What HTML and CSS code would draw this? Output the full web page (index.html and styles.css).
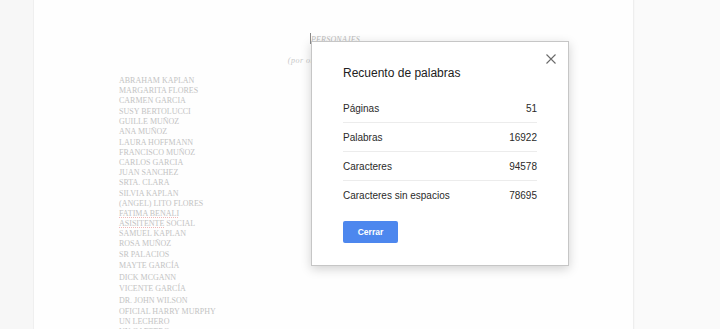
FILE: index.html
```html
<!DOCTYPE html>
<html lang="es">
<head>
<meta charset="utf-8">
<title>Recuento de palabras</title>
<link rel="stylesheet" href="styles.css">
</head>
<body>
<div class="workspace">
  <div class="page">
    <div class="heading"><span class="cursor"></span><span class="heading-text">PERSONAJES</span></div>
    <div class="subheading">(por orden de aparición)</div>
    <div class="names">
      <div class="name">ABRAHAM KAPLAN</div>
      <div class="name">MARGARITA FLORES</div>
      <div class="name">CARMEN GARCIA</div>
      <div class="name gap">SUSY BERTOLUCCI</div>
      <div class="name">GUILLE MUÑOZ</div>
      <div class="name">ANA MUÑOZ</div>
      <div class="name gap">LAURA HOFFMANN</div>
      <div class="name">FRANCISCO MUÑOZ</div>
      <div class="name">CARLOS GARCIA</div>
      <div class="name">JUAN SANCHEZ</div>
      <div class="name">SRTA. CLARA</div>
      <div class="name gap">SILVIA KAPLAN</div>
      <div class="name">(ANGEL) LITO FLORES</div>
      <div class="name"><span class="spell">FATIMA BENALI</span></div>
      <div class="name"><span class="spell">ASISITENTE</span> SOCIAL</div>
      <div class="name">SAMUEL KAPLAN</div>
      <div class="name">ROSA MUÑOZ</div>
      <div class="name wide">SR PALACIOS</div>
      <div class="name wide">MAYTE GARCÍA</div>
      <div class="name wide">DICK MCGANN</div>
      <div class="name wide">VICENTE GARCÍA</div>
      <div class="name wide">DR. JOHN WILSON</div>
      <div class="name wide">OFICIAL HARRY MURPHY</div>
      <div class="name">UN LECHERO</div>
      <div class="name">UN CARTERO</div>
    </div>
  </div>
</div>

<div class="dialog" role="dialog" aria-label="Recuento de palabras">
  <button class="close" aria-label="Cerrar">
    <svg width="12" height="12" viewBox="0 0 12 12"><path d="M1.5 1.5 L10.5 10.5 M10.5 1.5 L1.5 10.5" stroke="#6a6a6a" stroke-width="1.1" fill="none"/></svg>
  </button>
  <div class="title">Recuento de palabras</div>
  <div class="rows">
    <div class="row"><span>Páginas</span><span>51</span></div>
    <div class="row"><span>Palabras</span><span>16922</span></div>
    <div class="row"><span>Caracteres</span><span>94578</span></div>
    <div class="row"><span>Caracteres sin espacios</span><span>78695</span></div>
  </div>
  <button class="primary">Cerrar</button>
</div>
</body>
</html>
```

FILE: styles.css
```css
html, body {
  margin: 0;
  padding: 0;
  height: 100%;
}
body {
  background: #f7f7f7;
  font-family: "Liberation Sans", Arial, sans-serif;
  overflow: hidden;
}
.workspace {
  display: flex;
  height: 329px;
  background: linear-gradient(to right, #f7f7f7 0, #f7f7f7 635px, #fafafa 635px);
}
.page {
  margin-left: 33px;
  width: 601px;
  height: 100%;
  background: #fefefe;
  border-left: 1px solid #efefef;
  border-right: 1px solid #eeeeee;
  box-sizing: border-box;
  padding-left: 85px;
  font-family: "Liberation Serif", "Times New Roman", serif;
  color: #c3c3c3;
}
.heading {
  margin-top: 33px;
  margin-left: -82px;
  text-align: center;
  font-size: 8px;
  line-height: 12px;
  font-style: italic;
}
.heading-text {
  text-decoration: underline;
  color: #bdbdbd;
  letter-spacing: 0.2px;
}
.cursor {
  display: inline-block;
  width: 1px;
  height: 11px;
  background: #8a8a8a;
  vertical-align: -2px;
}
.subheading {
  margin-top: 9px;
  margin-left: -85px;
  text-align: center;
  font-size: 8px;
  line-height: 12px;
  font-style: italic;
  color: #c8c8c8;
  letter-spacing: 0.5px;
}
.names {
  margin-top: 9px;
  font-size: 8px;
}
.name {
  line-height: 10px;
  white-space: nowrap;
}
.name.gap {
  margin-top: 1px;
}
.name.wide {
  line-height: 11.4px;
}
.spell {
  text-decoration: underline dotted #efb8b8;
  text-decoration-thickness: 1px;
  text-underline-offset: 1px;
}
.dialog {
  position: absolute;
  left: 311px;
  top: 41px;
  width: 258px;
  box-sizing: border-box;
  background: #ffffff;
  border: 1px solid #c6c6c6;
  box-shadow: 0 3px 10px rgba(0, 0, 0, 0.18);
  padding: 23px 31px 22px 31px;
  color: #222222;
}
.close {
  position: absolute;
  top: 11px;
  right: 11px;
  width: 12px;
  height: 12px;
  padding: 0;
  border: 0;
  background: none;
  display: block;
}
.close svg {
  display: block;
}
.title {
  font-size: 12px;
  line-height: 16px;
  color: #212121;
}
.rows {
  margin-top: 13px;
  display: flex;
  flex-direction: column;
}
.row {
  display: flex;
  justify-content: space-between;
  align-items: center;
  height: 28px;
  font-size: 10px;
  color: #2a2a2a;
  border-bottom: 1px solid #ececec;
}
.row:last-child {
  border-bottom: 0;
}
.primary {
  margin-top: 12px;
  display: block;
  width: 55px;
  height: 22px;
  padding: 0;
  border: 0;
  border-radius: 2px;
  background: #4d87ee;
  color: #ffffff;
  font-family: "Liberation Sans", Arial, sans-serif;
  font-weight: bold;
  font-size: 8.5px;
}
```
